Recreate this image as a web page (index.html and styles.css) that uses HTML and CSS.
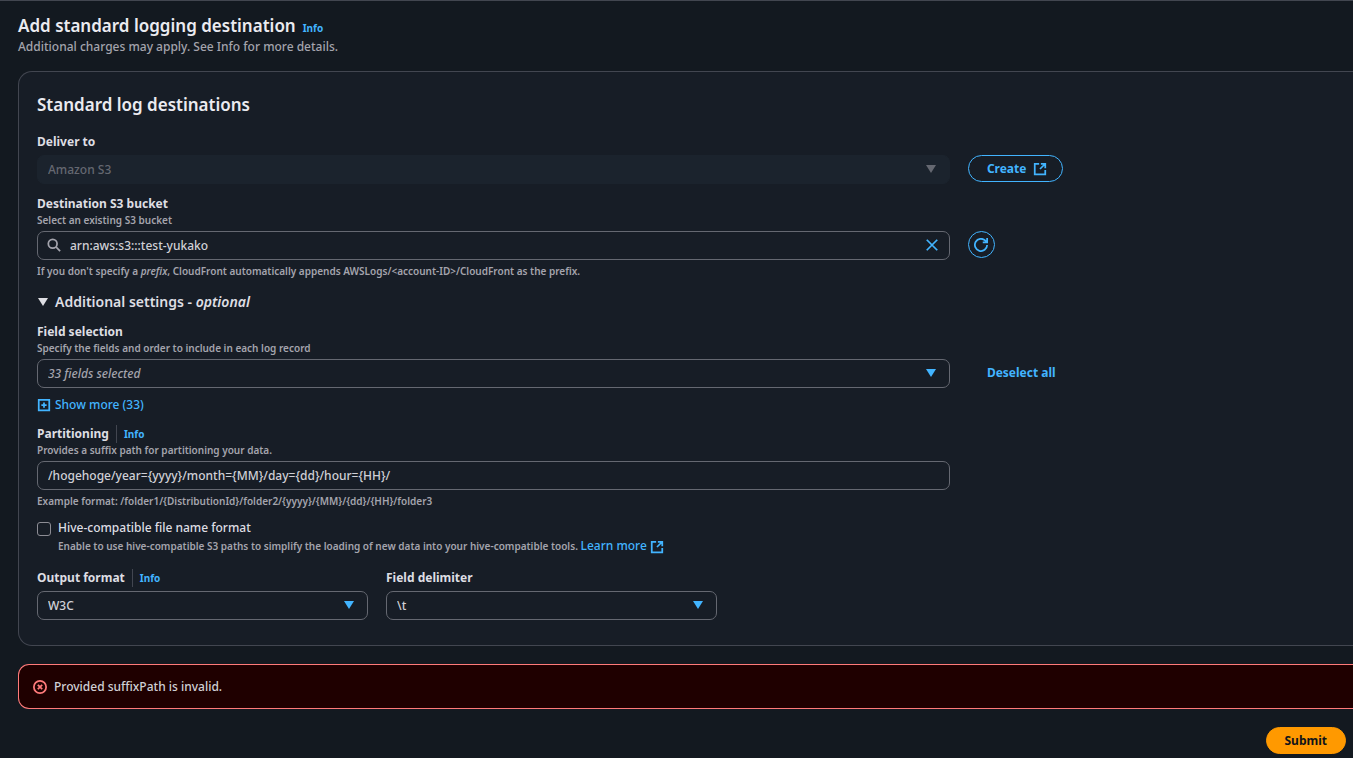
FILE: index.html
```html
<!DOCTYPE html>
<html lang="en">
<head>
  <meta charset="UTF-8" />
  <meta name="viewport" content="width=device-width, initial-scale=1.0" />
  <title>Add standard logging destination</title>
  <link rel="stylesheet" href="styles.css">
</head>
<body>

<main class="page">
  <header class="page-header">
    <div class="title-line">
      <h1>Add standard logging destination</h1>
      <a class="info" href="#">Info</a>
    </div>
    <p>Additional charges may apply. See Info for more details.</p>
  </header>

  <form>
    <section class="card">
      <h2>Standard log destinations</h2>

      <!-- Deliver to -->
      <div class="field">
        <label for="deliver">Deliver to</label>
        <div class="row">
          <div class="control">
            <select id="deliver" disabled>
              <option>Amazon S3</option>
            </select>
            <svg class="caret" viewBox="0 0 10 8"><path d="M0 0h10L5 8z"/></svg>
          </div>
          <a class="btn external" href="#">Create
            <svg class="icon" viewBox="0 0 16 16"><path d="M7 2H2v12h12V9M9 2h5v5M14 2L8 8"/></svg>
          </a>
        </div>
      </div>

      <!-- Bucket -->
      <div class="field">
        <label for="bucket">Destination S3 bucket</label>
        <p class="hint">Select an existing S3 bucket</p>
        <div class="row">
          <div class="control search">
            <svg class="icon search-icon" viewBox="0 0 16 16"><circle cx="6.5" cy="6.5" r="5"/><path d="M10.200 10.200L15 15"/></svg>
            <input type="text" id="bucket" value="arn:aws:s3:::test-yukako">
            <button type="button" class="clear" aria-label="Clear">
              <svg class="icon" viewBox="0 0 16 16"><path d="M2 2l12 12M14 2L2 14"/></svg>
            </button>
          </div>
          <button type="button" class="btn round" aria-label="Refresh">
            <svg class="icon" viewBox="0 0 16 16"><path d="M15 8a7 7 0 1 1-2-5l1.500 1.500M15 0v5h-5"/></svg>
          </button>
        </div>
        <p class="hint below">If you don't specify a <em>prefix</em>, CloudFront automatically appends AWSLogs/&lt;account-ID&gt;/CloudFront as the prefix.</p>
      </div>

      <button type="button" class="expander">
        <svg class="caret-left" viewBox="0 0 10 8"><path d="M0 0h10L5 8z"/></svg>
        <span>Additional settings - <em>optional</em></span>
      </button>

      <!-- Fields -->
      <div class="field">
        <label for="fields">Field selection</label>
        <p class="hint">Specify the fields and order to include in each log record</p>
        <div class="row">
          <div class="control">
            <select id="fields" class="placeholder">
              <option>33 fields selected</option>
            </select>
            <svg class="caret" viewBox="0 0 10 8"><path d="M0 0h10L5 8z"/></svg>
          </div>
          <button type="button" class="btn plain">Deselect all</button>
        </div>
        <button type="button" class="show-more">
          <svg class="icon" viewBox="0 0 16 16"><path d="M2 2h12v12H2zM8 5v6M5 8h6"/></svg>
          Show more (33)
        </button>
      </div>

      <!-- Partitioning -->
      <div class="field">
        <div class="label-line">
          <label for="partition">Partitioning</label>
          <a class="info" href="#">Info</a>
        </div>
        <p class="hint">Provides a suffix path for partitioning your data.</p>
        <div class="row">
          <div class="control">
            <input type="text" id="partition" value="/hogehoge/year={yyyy}/month={MM}/day={dd}/hour={HH}/">
          </div>
        </div>
        <p class="hint below">Example format: /folder1/{DistributionId}/folder2/{yyyy}/{MM}/{dd}/{HH}/folder3</p>
      </div>

      <div class="check">
        <input type="checkbox" id="hive">
        <div>
          <label for="hive">Hive-compatible file name format</label>
          <p class="hint">Enable to use hive-compatible S3 paths to simplify the loading of new data into your hive-compatible tools.
            <a class="learn" href="#">Learn more <svg class="icon" viewBox="0 0 16 16"><path d="M7 2H2v12h12V9M9 2h5v5M14 2L8 8"/></svg></a></p>
        </div>
      </div>

      <div class="formats">
        <div class="field">
          <div class="label-line">
            <label for="output">Output format</label>
            <a class="info" href="#">Info</a>
          </div>
          <div class="control">
            <select id="output">
              <option>W3C</option>
            </select>
            <svg class="caret" viewBox="0 0 10 8"><path d="M0 0h10L5 8z"/></svg>
          </div>
        </div>
        <div class="field">
          <label for="delimiter">Field delimiter</label>
          <div class="control">
            <select id="delimiter">
              <option>\t</option>
            </select>
            <svg class="caret" viewBox="0 0 10 8"><path d="M0 0h10L5 8z"/></svg>
          </div>
        </div>
      </div>
    </section>

    <div class="alert" role="alert">
      <svg class="icon" viewBox="0 0 16 16"><circle cx="8" cy="8" r="7"/><path d="M5.500 5.500l5 5M10.500 5.500l-5 5"/></svg>
      <span>Provided suffixPath is invalid.</span>
    </div>

    <div class="actions">
      <button type="submit" class="btn primary">Submit</button>
    </div>
  </form>
</main>

</body>
</html>
```
FILE: styles.css
```css
* {
  box-sizing: border-box;
}
body {
  margin: 0;
  background: #131920;
  color: #d0d0d6;
  font-family: "Noto Sans", "Open Sans", sans-serif;
  font-size: 12px;
  line-height: 18px;
  font-weight: 500;
}
h1, h2, p {
  margin: 0;
}
a {
  color: #42b4ff;
  text-decoration: none;
}
button, input, select {
  font: inherit;
  color: inherit;
}
button {
  cursor: pointer;
}
.page {
  border-top: 1px solid #424650;
  padding: 13px 0 4px 18px;
}

/* header */
.title-line {
  display: flex;
  align-items: baseline;
  gap: 7px;
}
h1, h2 {
  font-size: 17px;
  line-height: 24px;
  font-weight: 600;
  color: #ebebf0;
}
.page-header p {
  color: #a4a4ad;
}
.info {
  font-size: 10px;
  font-weight: 700;
}

/* card */
.card {
  margin-top: 15px;
  padding: 21px 0 25px 18px;
  background: #171d26;
  border: 1px solid #424650;
  border-right: none;
  border-radius: 14px 0 0 14px;
}
.card h2 {
  margin-bottom: 16px;
}
.field {
  margin-bottom: 11px;
}
label {
  display: block;
  font-weight: 700;
  color: #dedee3;
}
.label-line {
  display: flex;
  align-items: center;
}
.label-line .info {
  margin-left: 7px;
  padding-left: 7px;
  border-left: 1px solid #424650;
}
.hint {
  color: #a4a4ad;
  font-size: 10px;
  line-height: 14px;
  font-weight: 600;
}
.below {
  margin-top: 4px;
}
.row {
  display: grid;
  grid-template-columns: 64fr 27fr;
  gap: 18px;
  justify-items: start;
}
.control {
  position: relative;
  width: 100%;
  margin-top: 4px;
}
.row .btn {
  margin-top: 4px;
}
select, input[type="text"] {
  display: block;
  width: 100%;
  height: 29px;
  padding: 0 10px;
  background: #171d26;
  border: 1px solid #656871;
  border-radius: 7px;
  appearance: none;
}
select:disabled {
  background: #1b232d;
  border-color: #1b232d;
  color: #656871;
  opacity: 1;
}
select:disabled + .caret {
  fill: #656871;
}
.placeholder {
  color: #a4a4ad;
  font-style: italic;
}
.caret {
  position: absolute;
  top: 10px;
  right: 14px;
  width: 10px;
  height: 8px;
  fill: #42b4ff;
}
.icon {
  width: 14px;
  height: 14px;
  fill: none;
  stroke: currentColor;
  stroke-width: 2;
}
.search input {
  padding: 0 32px;
}
.search-icon {
  position: absolute;
  top: 7px;
  left: 10px;
  color: #a4a4ad;
}
.clear {
  position: absolute;
  top: 7px;
  right: 11px;
  display: flex;
  padding: 0;
  border: none;
  background: none;
  color: #42b4ff;
}

/* buttons */
.btn {
  display: inline-flex;
  align-items: center;
  gap: 7px;
  height: 27px;
  padding: 0 18px;
  background: none;
  border: 1px solid #42b4ff;
  border-radius: 14px;
  color: #42b4ff;
  font-weight: 700;
}
.external {
  padding-right: 15px;
}
.round {
  width: 27px;
  padding: 0;
  justify-content: center;
}
.plain {
  border-color: transparent;
}
.primary {
  background: #ff9900;
  border-color: #ff9900;
  color: #0f141a;
}
.expander, .show-more {
  display: flex;
  align-items: center;
  padding: 0;
  border: none;
  background: none;
}
.expander {
  gap: 7px;
  margin: 13px 0 10px;
  color: #dedee3;
  font-size: 14px;
  line-height: 22px;
  font-weight: 600;
}
.caret-left {
  width: 10px;
  height: 8px;
  margin-left: 1px;
  fill: currentColor;
}
.show-more {
  gap: 4px;
  margin-top: 8px;
  color: #42b4ff;
}

.check {
  display: flex;
  gap: 7px;
  margin-bottom: 14px;
}
.check input {
  flex: none;
  width: 14px;
  height: 14px;
  margin: 3px 0 0;
  border: 1px solid #8c8c94;
  border-radius: 3px;
  appearance: none;
}
.check label {
  font-weight: 500;
}
.check .hint {
  line-height: 18px;
}
.learn {
  font-size: 12px;
  font-weight: 500;
}
.learn .icon {
  vertical-align: middle;
}
.formats {
  display: grid;
  grid-template-columns: 15fr 15fr 28fr;
  gap: 18px;
}
.formats .field {
  margin-bottom: 0;
}

/* error message */
.alert {
  display: flex;
  align-items: center;
  gap: 7px;
  margin-top: 18px;
  padding: 13px 14px 12px;
  background: #1f0000;
  border: 1px solid #ff7a7a;
  border-right: none;
  border-radius: 11px 0 0 11px;
}
.alert .icon {
  color: #ff7a7a;
}
.actions {
  display: flex;
  justify-content: flex-end;
  margin-top: 18px;
  padding-right: 7px;
}
```
